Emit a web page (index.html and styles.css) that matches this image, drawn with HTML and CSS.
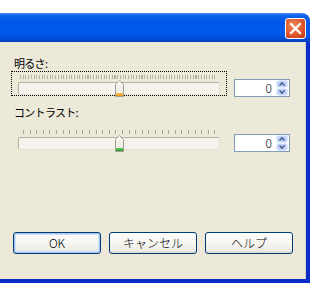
FILE: index.html
```html
<!DOCTYPE html>
<html>
    <head>
        <link rel="stylesheet" href="styles.css">
    </head>
    <body>
        <div class="window">
            <div class="titleBar">
                <div class="closeBtn">
                    <svg width="13" height="13" viewBox="0 0 13 13">
                        <path d="M2 2 L11 11 M11 2 L2 11" stroke="#fff" stroke-width="2.2" stroke-linecap="square"/>
                    </svg>
                </div>
            </div>
            <div class="client">
                <div class="label">明るさ:</div>
                <div class="sliderRow">
                    <div class="slider focused">
                        <div class="ticks dense"></div>
                        <div class="track"></div>
                        <svg class="thumb" width="9" height="17" viewBox="0 0 9 17">
                            <path d="M0.5 4.5 L4.5 0.5 L8.5 4.5 V16.5 H0.5 Z" fill="#fbfbf8" stroke="#a19e8e"/>
                            <rect x="1" y="5" width="7" height="8" fill="#f1efe6"/>
                            <rect x="1" y="13" width="7" height="3" fill="#f5b440"/>
                            <rect x="1" y="15" width="7" height="1" fill="#e39a1b"/>
                        </svg>
                    </div>
                    <div class="spinBox">
                        <span class="spinValue">0</span>
                        <div class="spinBtns">
                            <svg width="12" height="16" viewBox="0 0 12 16">
                                <rect x="0.5" y="0.5" width="11" height="7" rx="2" fill="#c3d3fd" stroke="#e6eeff"/>
                                <rect x="0.5" y="8.5" width="11" height="7" rx="2" fill="#c3d3fd" stroke="#e6eeff"/>
                                <path d="M3.5 5.5 L6 3 L8.5 5.5" fill="none" stroke="#4d6185" stroke-width="1.6"/>
                                <path d="M3.5 10.5 L6 13 L8.5 10.5" fill="none" stroke="#4d6185" stroke-width="1.6"/>
                            </svg>
                        </div>
                    </div>
                </div>
                <div class="label second">コントラスト:</div>
                <div class="sliderRow">
                    <div class="slider">
                        <div class="ticks sparse"></div>
                        <div class="track"></div>
                        <svg class="thumb" width="9" height="17" viewBox="0 0 9 17">
                            <path d="M0.5 4.5 L4.5 0.5 L8.5 4.5 V16.5 H0.5 Z" fill="#fbfbf8" stroke="#a19e8e"/>
                            <rect x="1" y="5" width="7" height="8" fill="#f1efe6"/>
                            <rect x="1" y="13" width="7" height="3" fill="#4fc24f"/>
                            <rect x="1" y="15" width="7" height="1" fill="#21a121"/>
                        </svg>
                    </div>
                    <div class="spinBox">
                        <span class="spinValue">0</span>
                        <div class="spinBtns">
                            <svg width="12" height="16" viewBox="0 0 12 16">
                                <rect x="0.5" y="0.5" width="11" height="7" rx="2" fill="#c3d3fd" stroke="#e6eeff"/>
                                <rect x="0.5" y="8.5" width="11" height="7" rx="2" fill="#c3d3fd" stroke="#e6eeff"/>
                                <path d="M3.5 5.5 L6 3 L8.5 5.5" fill="none" stroke="#4d6185" stroke-width="1.6"/>
                                <path d="M3.5 10.5 L6 13 L8.5 10.5" fill="none" stroke="#4d6185" stroke-width="1.6"/>
                            </svg>
                        </div>
                    </div>
                </div>
                <div class="buttons">
                    <div class="btn default">OK</div>
                    <div class="btn">キャンセル</div>
                    <div class="btn">ヘルプ</div>
                </div>
            </div>
        </div>
    </body>
</html>
```

FILE: styles.css
```css
body{
    margin:0px;
    padding:0px;
    background-color:white;
    font-family:"Noto Sans CJK JP", "DejaVu Sans", sans-serif;
    font-weight:300;
    font-size:12px;
    color:black;
}

.window{
    margin-top:13px;
    width:310px;
}

.titleBar{
    height:29px;
    border-top-right-radius:8px;
    background:linear-gradient(#3d8bf6 0px, #0d61ea 3px, #0058e8 8px, #0059ef 20px, #004fdd 25px, #003fbc 29px);
    display:flex;
    justify-content:flex-end;
    align-items:flex-start;
}

.closeBtn{
    width:19px;
    height:19px;
    margin-top:5px;
    margin-right:4px;
    border:1px solid white;
    border-radius:3px;
    background:radial-gradient(circle at 40% 35%, #f08860 0px, #e1582b 9px, #c9411b 14px);
    display:flex;
    align-items:center;
    justify-content:center;
}

.client{
    height:223px;
    background-color:#ece9d8;
    border-right:4px solid #0a2dc9;
    border-bottom:4px solid #0a2dc9;
    box-shadow:inset -1px 0px 0px #d6d2c2;
    padding:14px 0px 0px 11px;
    display:flex;
    flex-direction:column;
}

.label{
    height:14px;
    line-height:14px;
    font-size:11px;
    font-weight:400;
    letter-spacing:-0.7px;
    padding-left:3px;
    margin-bottom:1px;
}

.label.second{
    margin-top:8px;
    margin-bottom:7px;
}

.sliderRow{
    display:flex;
    align-items:flex-start;
    gap:7px;
}

.slider{
    position:relative;
    width:214px;
    height:23px;
    border:1px dotted transparent;
}

.slider.focused{
    border-color:black;
}

.ticks{
    height:4px;
    margin:3px 9px 0px 8px;
}

.ticks.dense{
    background:repeating-linear-gradient(90deg, #b3b0a2 0px, #b3b0a2 1px, transparent 1px, transparent 2.7px);
}

.ticks.sparse{
    margin-left:11px;
    background:repeating-linear-gradient(90deg, #a9a698 0px, #a9a698 1px, transparent 1px, transparent 6.6px);
}

.track{
    height:11px;
    margin:3px 6px 0px 6px;
    background-color:#f4f3ee;
    border:1px solid #b5b2a3;
    border-bottom-color:#e2dfd2;
    border-right-color:#e2dfd2;
    border-radius:2px;
}

.thumb{
    position:absolute;
    left:103px;
    top:8px;
}

.spinBox{
    margin-top:8px;
    width:54px;
    height:16px;
    border:1px solid #7f9db9;
    background-color:white;
    display:flex;
    align-items:center;
    justify-content:flex-end;
}

.spinValue{
    line-height:16px;
    padding-right:4px;
}

.spinBtns{
    width:12px;
    height:16px;
    margin-right:1px;
}

.spinBtns svg{
    display:block;
}

.buttons{
    display:flex;
    gap:8px;
    margin-top:auto;
    margin-bottom:25px;
    padding-left:2px;
}

.btn{
    width:86px;
    height:20px;
    line-height:20px;
    text-align:center;
    border:1px solid #003c74;
    border-radius:3px;
    background:linear-gradient(#ffffff 0px, #f6f5f0 10px, #ebeae4 18px, #d6d2c6 20px);
}

.btn.default{
    box-shadow:inset 0px 0px 0px 1px #aac8f4, inset 0px 0px 0px 2px #cddcf6;
}
```
